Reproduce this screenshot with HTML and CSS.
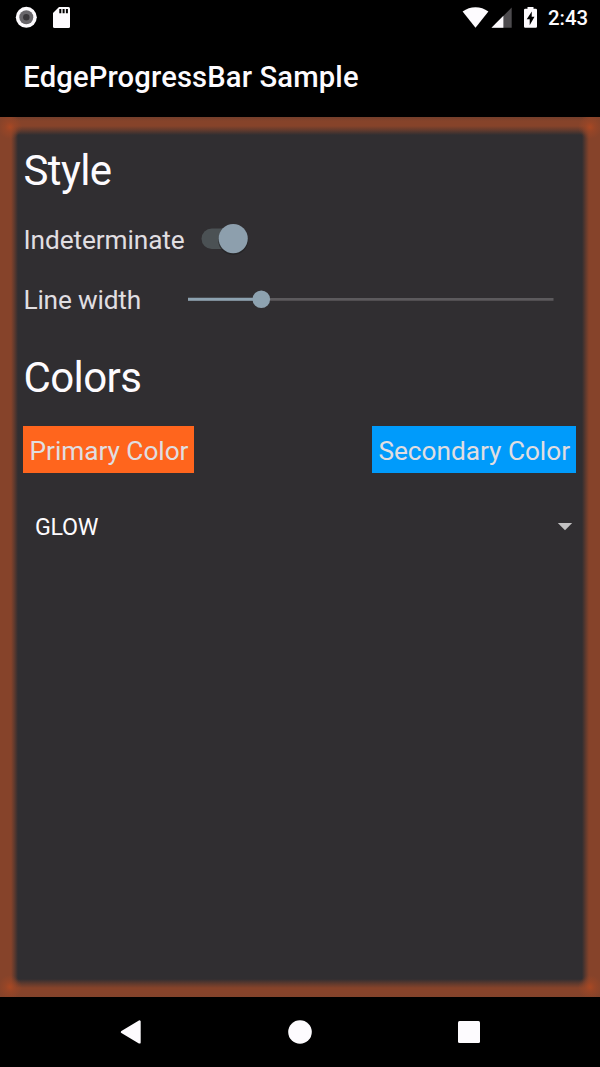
FILE: index.html
```html
<!DOCTYPE html>
<html lang="en">
<head>
<meta charset="utf-8">
<title>EdgeProgressBar Sample</title>
<link rel="stylesheet" href="styles.css">
</head>
<body>
<div class="screen">
  <header class="status">
    <svg class="status-left" width="80" height="35" viewBox="0 0 80 35">
      <circle cx="26.3" cy="17.3" r="10.5" fill="#fdfbfe"/>
      <circle cx="26.3" cy="17.3" r="7" fill="#69676b"/>
      <circle cx="26.3" cy="17.3" r="3.2" fill="#39373a"/>
      <path d="M59 7H68.5Q70 7 70 8.500V26.500Q70 28 68.500 28H54.500Q53 28 53 26.500V13Z" fill="#fdfbfe"/>
      <path d="M59.300 9h2v4.300h-2zM62.600 9h2v4.300h-2zM65.900 9h2v4.300h-2z" fill="#000"/>
    </svg>
    <div class="status-right">
      <svg width="80" height="35" viewBox="460 0 80 35">
        <path d="M475.500 27.700L462.600 11.500Q468.500 7.200 475.500 7.200T488.400 11.500Z" fill="#fdfbfe"/>
        <path d="M511.700 7.500V27.800H491.500Z" fill="#4d4b4e"/>
        <path d="M503.400 15.800V27.800H491.500Z" fill="#fdfbfe"/>
        <path d="M527.500 7H533.500V8.800H535.800Q537 8.800 537 10V26.500Q537 27.800 535.800 27.800H525.200Q524 27.800 524 26.500V10Q524 8.800 525.200 8.800H527.500Z" fill="#fdfbfe"/>
        <path d="M531.800 11.500L526.700 19.300H529.700V25.200L534.500 16.700H531.700Z" fill="#000"/>
      </svg>
      <span class="clock">2:43</span>
    </div>
  </header>
  <h1 class="title">EdgeProgressBar Sample</h1>
  <main class="content">
    <h2 class="heading">Style</h2>
    <div class="row row-switch">
      <span class="label">Indeterminate</span>
      <svg width="56" height="40" viewBox="196 219 56 40">
        <rect x="201.500" y="228.500" width="42" height="20.500" rx="10.250" fill="#4b5154"/>
        <circle cx="233.200" cy="239.900" r="15" fill="#202022" opacity=".65"/>
        <circle cx="233.200" cy="238.600" r="14.600" fill="#8d9fad"/>
      </svg>
    </div>
    <div class="row row-slider">
      <span class="label label-width">Line width</span>
      <svg width="366" height="20" viewBox="188 289 366 20">
        <path d="M188 299.300H553.500" stroke="#5c5a5d" stroke-width="2.800"/>
        <path d="M188 299.300H261" stroke="#8da2b0" stroke-width="2.900"/>
        <circle cx="261.300" cy="299.200" r="8.800" fill="#8da2b0"/>
      </svg>
    </div>
    <h2 class="heading heading-colors">Colors</h2>
    <div class="buttons">
      <div class="button primary">Primary Color</div>
      <div class="button secondary">Secondary Color</div>
    </div>
    <div class="spinner">
      <span>GLOW</span>
      <svg width="16" height="9" viewBox="0 0 16 9"><path d="M.8 1H15.200L8 8.200Z" fill="#c2c1c2"/></svg>
    </div>
    <div class="edge edge-top"></div>
    <div class="edge edge-right"></div>
    <div class="edge edge-bottom"></div>
    <div class="edge edge-left"></div>
    <div class="corner corner-tl"></div>
    <div class="corner corner-tr"></div>
    <div class="corner corner-bl"></div>
    <div class="corner corner-br"></div>
  </main>
  <nav class="nav">
    <svg width="24" height="26" viewBox="0 0 24 26"><path d="M3 13L20.500 2.600V23.400Z" fill="#fdfbfe" stroke="#fdfbfe" stroke-width="2.400" stroke-linejoin="round"/></svg>
    <svg width="24" height="26" viewBox="0 0 24 26"><circle cx="12" cy="13" r="11.800" fill="#fdfbfe"/></svg>
    <svg width="24" height="26" viewBox="0 0 24 26"><rect x="1" y="2" width="22" height="22" rx="1.500" fill="#fdfbfe"/></svg>
  </nav>
</div>
</body>
</html>
```
FILE: styles.css
```css
* { box-sizing: border-box; }
body { margin: 0; background: #000; font-family: Roboto, sans-serif; }
.screen { width: 600px; height: 1067px; display: flex; flex-direction: column; overflow: hidden; white-space: nowrap; }
svg { display: block; flex: none; }
.status { height: 35px; display: flex; justify-content: space-between; }
.status-right { display: flex; width: 140px; }
.clock { padding-left: 8px; font-size: 20.4px; line-height: 37px; font-weight: 500; color: #fdfbfe; }
.title { margin: 0; height: 82px; padding-left: 23.300px; font-size: 29.200px; line-height: 84px; font-weight: 500; letter-spacing: .14px; color: #fdfbfe; }
.content { position: relative; height: 880px; padding: 23px 23.500px 0; background: #302e31; }
.heading { margin: 0; height: 60px; font-size: 42px; line-height: 61px; font-weight: 400; letter-spacing: -.6px; color: #fdfbfe; }
.heading-colors { margin-top: 28px; }
.row { display: flex; align-items: center; color: #e0dee1; font-size: 26.250px; letter-spacing: -.1px; }
.row-switch { height: 40px; margin-top: 19px; gap: 11px; }
.row-slider { height: 40px; margin-top: 20px; }
.label { height: 40px; line-height: 42px; }
.label-width { width: 164.500px; letter-spacing: -.2px; }
.buttons { display: flex; justify-content: space-between; margin: 19px .5px 0 -.5px; }
.button { height: 47px; padding: 0 6px 0 6.500px; font-size: 26.250px; line-height: 50px; letter-spacing: -.04px; color: #e0dee1; }
.primary { background: #ff651d; }
.secondary { background: #009bfb; }
.spinner { display: flex; align-items: center; justify-content: space-between; height: 40px; margin-top: 33px; padding: 0 3.500px 0 11.500px; font-size: 23.300px; letter-spacing: -.3px; color: #fdfbfe; }
.spinner span { padding-top: 2px; }
.edge { position: absolute; }
.edge-top { inset: 0 0 auto 0; height: 18px; background: linear-gradient(to bottom, #723e2b 0, #86432a 4px, #86432a 9px, #86432a99 13px, #86432a00 18px); }
.edge-bottom { inset: auto 0 0 0; height: 18px; background: linear-gradient(to top, #82432b 0, #86432a 4px, #86432a 9px, #86432a99 13px, #86432a00 18px); }
.edge-left { inset: 0 auto 0 0; width: 18px; background: linear-gradient(to right, #86432a 11px, #86432a99 14px, #86432a00 18px); }
.edge-right { inset: 0 0 0 auto; width: 18px; background: linear-gradient(to left, #86432a 11px, #86432a99 14px, #86432a00 18px); }
.corner { position: absolute; width: 24px; height: 24px; background: radial-gradient(circle, #b84a20b0 0, #a8482470 5px, #87442b00 12px); }
.corner-tl { top: -2px; left: -2px; clip-path: inset(2px 0 0 2px); }
.corner-tr { top: -2px; right: -2px; clip-path: inset(2px 2px 0 0); }
.corner-bl { bottom: -2px; left: -2px; clip-path: inset(0 0 2px 2px); }
.corner-br { bottom: -2px; right: -2px; clip-path: inset(0 2px 2px 0); }
.nav { height: 70px; display: flex; align-items: center; justify-content: space-between; padding: 0 119px; }
```
